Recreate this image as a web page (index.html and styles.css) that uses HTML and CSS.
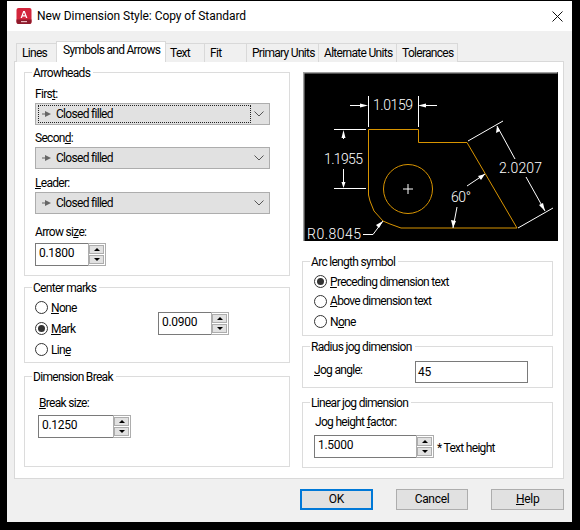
FILE: index.html
```html
<!DOCTYPE html>
<html lang="en">
<head>
  <meta charset="UTF-8">
  <title>New Dimension Style: Copy of Standard</title>
  <link rel="stylesheet" href="styles.css">
</head>
<body>
  <div class="window">
    <div class="titlebar">
      <svg class="app-icon" width="16" height="16" viewBox="0 0 16 16">
        <rect x="0.5" y="0" width="15" height="16" rx="2" fill="#d3263c"/>
        <path d="M0.5 11.5h15V14a2 2 0 0 1-2 2h-11a2 2 0 0 1-2-2z" fill="#8e1a2b"/>
        <path d="M4.6 10 7.2 3h1.6l2.6 7H10l-.5-1.6H6.5L6 10zM6.9 7.3h2.2L8 4.4z" fill="#fff"/>
        <rect x="5" y="13" width="6" height="1.2" fill="#e9b7be"/>
      </svg>
      <span class="title">New Dimension Style: Copy of Standard</span>
      <svg class="close" width="11" height="11" viewBox="0 0 11 11">
        <path d="M0.5 0.5l10 10M10.5 0.5l-10 10" stroke="#111" fill="none"/>
      </svg>
    </div>

    <div class="client">
      <div class="tabs">
        <span class="tab tab-lines">Lines</span>
        <span class="tab tab-symbols active">Symbols and Arrows</span>
        <span class="tab tab-text">Text</span>
        <span class="tab tab-fit">Fit</span>
        <span class="tab tab-primary">Primary Units</span>
        <span class="tab tab-alternate">Alternate Units</span>
        <span class="tab tab-tolerances">Tolerances</span>
      </div>

      <div class="panel">
        <div class="col col-left">
          <div class="group group-arrowheads">
            <div class="legend">Arrowheads</div>
            <div class="label label-first">Firs<u>t</u>:</div>
            <div class="combo focused">
              <span class="combo-value">
                <svg class="arrow-icon" width="9" height="8" viewBox="0 0 9 8"><path d="M0 3.5h4V4.500H0zM3 1l6 3-6 3z" fill="#666"/></svg>
                Closed filled
              </span>
              <svg class="chevron" width="10" height="6" viewBox="0 0 10 6"><path d="M0.500 0.500 5 5l4.500-4.500" stroke="#555" fill="none"/></svg>
            </div>
            <div class="label label-second">Secon<u>d</u>:</div>
            <div class="combo">
              <span class="combo-value">
                <svg class="arrow-icon" width="9" height="8" viewBox="0 0 9 8"><path d="M0 3.5h4V4.500H0zM3 1l6 3-6 3z" fill="#666"/></svg>
                Closed filled
              </span>
              <svg class="chevron" width="10" height="6" viewBox="0 0 10 6"><path d="M0.500 0.500 5 5l4.500-4.500" stroke="#555" fill="none"/></svg>
            </div>
            <div class="label label-leader"><u>L</u>eader:</div>
            <div class="combo">
              <span class="combo-value">
                <svg class="arrow-icon" width="9" height="8" viewBox="0 0 9 8"><path d="M0 3.5h4V4.500H0zM3 1l6 3-6 3z" fill="#666"/></svg>
                Closed filled
              </span>
              <svg class="chevron" width="10" height="6" viewBox="0 0 10 6"><path d="M0.500 0.500 5 5l4.500-4.500" stroke="#555" fill="none"/></svg>
            </div>
            <div class="label label-size">Arrow si<u>z</u>e:</div>
            <div class="spin spin-small">
              <span class="spin-input">0.1800</span>
              <span class="spin-btns"><i class="up"></i><i class="down"></i></span>
            </div>
          </div>

          <div class="group group-center">
            <div class="legend">Center marks</div>
            <div class="center-row">
              <div class="radios">
                <div class="radio-row"><span class="radio"></span><span><u>N</u>one</span></div>
                <div class="radio-row"><span class="radio checked"></span><span><u>M</u>ark</span></div>
                <div class="radio-row"><span class="radio"></span><span>Lin<u>e</u></span></div>
              </div>
              <div class="spin spin-small spin-center">
                <span class="spin-input">0.0900</span>
                <span class="spin-btns"><i class="up"></i><i class="down"></i></span>
              </div>
            </div>
          </div>

          <div class="group group-break">
            <div class="legend">Dimension Break</div>
            <div class="label label-break"><u>B</u>reak size:</div>
            <div class="spin spin-break">
              <span class="spin-input">0.1250</span>
              <span class="spin-btns"><i class="up"></i><i class="down"></i></span>
            </div>
          </div>
        </div>

        <div class="col col-right">
          <svg class="preview" width="255" height="169" viewBox="303 73 255 169">
            <rect x="303" y="73" width="255" height="169" fill="#000"/>
            <path d="M303.500 242V73.500H557.500" stroke="#a0a0a0" stroke-width="2" fill="none"/>
            <g class="part">
              <path d="M368.500 130.500H418.500V143.500H467L517 229H401L390 225 383 222 374 212 370 202 368.500 196z"/>
              <circle cx="408" cy="190" r="24.500"/>
            </g>
            <g class="dim">
              <path d="M403 190H413M408 185V195"/>
              <path d="M368.500 97V128M418.500 97V128M350 106.500H360M426 106.500H437"/>
              <path d="M334 130.500H366M334 189.500H366M343.500 139V140M343.500 170V183"/>
              <path d="M468 142 503 122M518 229 553 209M497 127 515 160M526 178 545 212"/>
              <path d="M485 175 467 187M457 208 453 229M363 235.500H373L383 222"/>
            </g>
            <g class="heads">
              <path d="M368 106.500 360 104.500V108.500zM418 106.500 426 104.500V108.500z"/>
              <path d="M343.500 131 341.500 139H345.500zM343.500 189 341.500 183H345.500z"/>
              <path d="M497 127 496 134 500 132zM545 212 539 206 543 204zM485 175 478 177 481 181zM453 229 451 221 456 222zM383 222 376 226 379 229z"/>
            </g>
            <text class="dim-text" x="373" y="111" textLength="40">1.0159</text>
            <text class="dim-text" x="324" y="165" textLength="39">1.1955</text>
            <text class="dim-text" x="499" y="174" textLength="43">2.0207</text>
            <text class="dim-text" x="451" y="203" textLength="20">60°</text>
            <text class="dim-text" x="307" y="240" textLength="54">R0.8045</text>
          </svg>

          <div class="group group-arc">
            <div class="legend">Arc length symbol</div>
            <div class="radios">
              <div class="radio-row"><span class="radio checked"></span><span><u>P</u>receding dimension text</span></div>
              <div class="radio-row"><span class="radio"></span><span><u>A</u>bove dimension text</span></div>
              <div class="radio-row"><span class="radio"></span><span>N<u>o</u>ne</span></div>
            </div>
          </div>

          <div class="group group-radius">
            <div class="legend">Radius jog dimension</div>
            <div class="jog-row">
              <span class="jog-label"><u>J</u>og angle:</span>
              <span class="text-input">45</span>
            </div>
          </div>

          <div class="group group-linear">
            <div class="legend">Linear jog dimension</div>
            <div class="label label-jog">Jog height <u>f</u>actor:</div>
            <div class="linear-row">
              <div class="spin spin-jog">
                <span class="spin-input">1.5000</span>
                <span class="spin-btns"><i class="up"></i><i class="down"></i></span>
              </div>
              <span class="suffix">* Text height</span>
            </div>
          </div>
        </div>
      </div>

      <div class="buttons">
        <span class="btn default">OK</span>
        <span class="btn">Cancel</span>
        <span class="btn"><u>H</u>elp</span>
      </div>
    </div>
  </div>
</body>
</html>
```

FILE: styles.css
```css
* {
  box-sizing: border-box;
}

html, body {
  margin: 0;
  height: 100%;
  background: #000;
  overflow: hidden;
}

body {
  padding: 1px 8px 8px 7px;
  font-family: Roboto, "Liberation Sans", sans-serif;
  font-size: 12px;
  letter-spacing: -0.7px;
  color: #000;
}

u {
  text-underline-offset: 1px;
}

.window {
  width: 565px;
  height: 521px;
  display: flex;
  flex-direction: column;
  background: #f0f0f0;
}

/* Title bar */
.titlebar {
  height: 30px;
  flex: none;
  display: flex;
  align-items: center;
  padding: 0 9px 0 9px;
  background: #fff;
}

.app-icon {
  margin-right: 5px;
}

.title {
  flex: 1;
  font-size: 12px;
  letter-spacing: -0.05px;
}

/* Tabs */
.client {
  flex: 1;
  padding: 11px 8px 0 7px;
}

.tabs {
  height: 20px;
  display: flex;
  align-items: flex-end;
  padding-left: 2px;
  position: relative;
  z-index: 1;
  margin-bottom: -1px;
}

.tab {
  height: 19px;
  border: 1px solid #d9d9d9;
  border-bottom: 0;
  margin-left: -1px;
  padding-left: 5px;
  line-height: 18px;
  white-space: nowrap;
  background: #f0f0f0;
}

.tab:first-child {
  margin-left: 0;
}

.tab.active {
  height: 21px;
  line-height: 17px;
  background: #fff;
  padding-bottom: 2px;
}

.tab-lines { width: 41px; }
.tab-symbols { width: 110px; padding-left: 6px; }
.tab-text { width: 40px; padding-left: 4px; }
.tab-fit { width: 43px; }
.tab-primary { width: 73px; }
.tab-alternate { width: 79px; }
.tab-tolerances { width: 62px; }

/* Panel */
.panel {
  width: 550px;
  height: 418px;
  display: flex;
  gap: 12px;
  padding: 10px 0 0 9px;
  background: #fff;
  border: 1px solid #d9d9d9;
}

.col {
  display: flex;
  flex-direction: column;
}

.col-left {
  width: 266px;
}

.col-right {
  width: 251px;
}

.group {
  flex: none;
  border: 1px solid #dcdcdc;
  padding: 0 0 0 10px;
}

.legend {
  display: table;
  height: 16px;
  line-height: 15px;
  margin: -7px 0 -2px -3px;
  padding: 0 3px 0 1px;
  background: #fff;
}

.group-arrowheads { height: 204px; }
.group-center { height: 76px; margin-top: 11px; }
.group-break { height: 91px; margin-top: 13px; }
.group-arc { height: 75px; margin-top: 20px; }
.group-radius { height: 42px; margin-top: 10px; }
.group-linear { height: 66px; margin-top: 14px; }

.label {
  height: 16px;
  line-height: 16px;
  margin-bottom: 1px;
}

.label-first { margin-top: 6px; }
.label-second { margin-top: 5px; }
.label-leader { margin-top: 6px; }
.label-size { margin-top: 10px; margin-bottom: 3px; }
.label-break { margin-top: 11px; margin-left: 4px; margin-bottom: 4px; }
.label-jog { margin-top: 4px; margin-left: 2px; margin-bottom: 5px; }

/* Combo box */
.combo {
  width: 235px;
  height: 22px;
  display: flex;
  align-items: center;
  justify-content: space-between;
  padding: 0 5px 0 2px;
  background: #e1e1e1;
  border: 1px solid #adadad;
}

.combo-value {
  width: 213px;
  height: 18px;
  display: flex;
  align-items: center;
  gap: 5px;
  padding-left: 3px;
  border: 1px solid transparent;
}

.combo.focused .combo-value {
  border: 1px dotted #222;
}

.arrow-icon {
  flex: none;
}

/* Spin box */
.spin {
  height: 23px;
  display: flex;
  border: 1px solid #adadad;
  border-left: 0;
  background: #fff;
}

.spin-small { width: 71px; }
.spin-break { width: 93px; margin-left: 3px; }
.spin-jog { width: 120px; }

.spin-input {
  flex: 1;
  line-height: 18px;
  padding-left: 3px;
  letter-spacing: -0.3px;
  border: 1px solid #7a7a7a;
  border-right: 0;
  margin: -1px 0;
}

.spin-btns {
  width: 17px;
  flex: none;
  display: flex;
  flex-direction: column;
  gap: 1px;
  padding: 1px 1px 1px 0;
  border-left: 1px solid #adadad;
}

.spin-btns i {
  flex: 1;
  display: flex;
  align-items: center;
  justify-content: center;
  background: #e1e1e1;
  border: 1px solid #adadad;
}

.spin-btns i::after {
  content: '';
  border-left: 3px solid transparent;
  border-right: 3px solid transparent;
}

.spin-btns .up::after {
  border-bottom: 3px solid #000;
}

.spin-btns .down::after {
  border-top: 3px solid #000;
}

/* Radios */
.radios {
  display: flex;
  flex-direction: column;
}

.radio-row {
  height: 21px;
  display: flex;
  align-items: center;
  gap: 3px;
}

.radio {
  width: 13px;
  height: 13px;
  flex: none;
  display: flex;
  align-items: center;
  justify-content: center;
  border: 1px solid #333;
  border-radius: 50%;
  background: #fff;
}

.radio.checked::after {
  content: '';
  width: 7px;
  height: 7px;
  border-radius: 50%;
  background: #333;
}

.center-row {
  display: flex;
  align-items: flex-start;
}

.center-row .radios {
  width: 123px;
  margin-top: 2px;
}

.spin-center {
  margin-top: 17px;
}

.group-arc .radios {
  margin-top: 2px;
  margin-left: 1px;
}

.group-arc .radio-row:nth-child(2) {
  height: 18px;
}

.group-arc .radio-row:nth-child(3) {
  margin-top: 1px;
}

/* Jog */
.jog-row {
  display: flex;
  align-items: center;
  margin-top: 7px;
  padding-left: 1px;
}

.jog-label {
  width: 101px;
  padding-bottom: 4px;
}

.text-input {
  width: 113px;
  height: 22px;
  line-height: 20px;
  padding-left: 2px;
  letter-spacing: -0.3px;
  border: 1px solid #7a7a7a;
}

.linear-row {
  display: flex;
  align-items: center;
  gap: 3px;
  margin-left: 1px;
}

.suffix {
  padding-top: 3px;
}

/* Preview */
.preview {
  display: block;
  flex: none;
  margin-left: 1px;
}

.part path, .part circle {
  fill: none;
  stroke: #d89400;
}

.dim path {
  fill: none;
  stroke: #fff;
}

.heads path {
  fill: #fff;
}

.dim-text {
  fill: #fff;
  font-family: Roboto, sans-serif;
  font-weight: 300;
  font-size: 14px;
  letter-spacing: 0;
}

/* Buttons */
.buttons {
  display: flex;
  gap: 23px;
  padding: 10px 0 0 286px;
}

.btn {
  width: 73px;
  height: 21px;
  line-height: 19px;
  text-align: center;
  letter-spacing: -0.3px;
  background: #e1e1e1;
  border: 1px solid #adadad;
}

.btn.default {
  border: 2px solid #0078d7;
  line-height: 17px;
}
```
